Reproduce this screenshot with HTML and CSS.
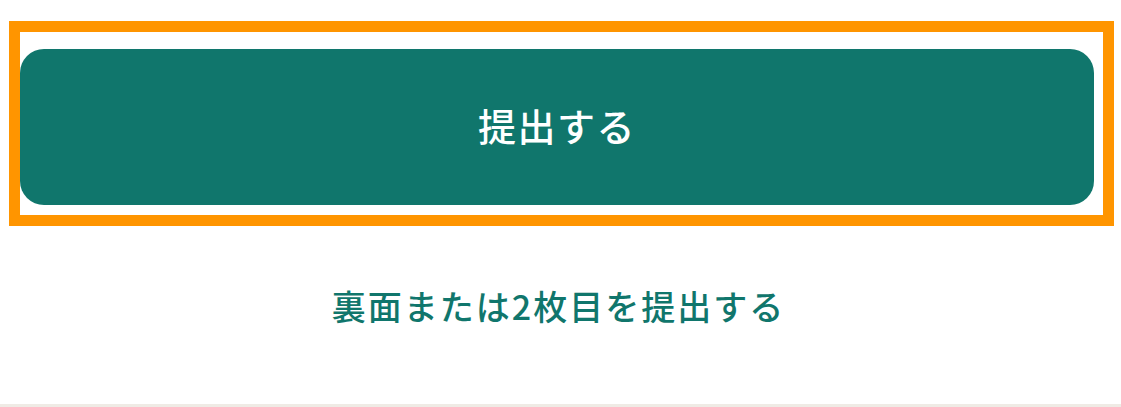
FILE: index.html
```html
<!DOCTYPE html>
<html lang="ja">
<head>
<meta charset="utf-8">
<link rel="stylesheet" href="styles.css">
</head>
<body>
<div class="page">
  <div class="highlight">
    <button class="submit">提出する</button>
  </div>
  <div class="secondary">
    <a class="link">裏面または2枚目を提出する</a>
  </div>
  <div class="footer-line"></div>
</div>
</body>
</html>
```
FILE: styles.css
```css
html, body {
  margin: 0;
  padding: 0;
  background: #ffffff;
  font-family: "Noto Sans CJK JP", "Noto Sans", sans-serif;
}
.page {
  width: 1121px;
  height: 407px;
  display: flex;
  flex-direction: column;
  overflow: hidden;
}
.highlight {
  margin: 21px 0 0 9px;
  width: 1105px;
  box-sizing: border-box;
  border: 11px solid #ff9500;
  padding: 17px 9px 10px 0;
}
.submit {
  display: flex;
  align-items: center;
  justify-content: center;
  width: 100%;
  height: 156px;
  border: none;
  border-radius: 24px;
  background: #10766c;
  color: #ffffff;
  font-family: inherit;
  font-size: 38px;
  font-weight: 500;
  letter-spacing: 1.5px;
  padding: 0 0 6px 0;
}
.secondary {
  flex: 1;
  display: flex;
  align-items: center;
  justify-content: center;
  padding: 0 4px 20px 0;
}
.link {
  color: #10766c;
  font-size: 34px;
  font-weight: 500;
  letter-spacing: 2px;
}
.footer-line {
  height: 3px;
  background: #efebe5;
}
```
